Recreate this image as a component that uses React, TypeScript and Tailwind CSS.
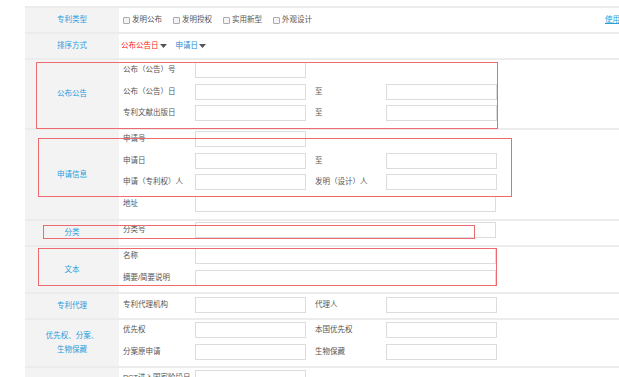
import React from 'react';

const fontStack = '"Liberation Sans", "Noto Sans CJK SC", sans-serif';

const Field: React.FC<{ wide?: boolean }> = ({ wide }) => (
  <div className={`${wide ? 'w-[301px]' : 'w-[111px]'} h-[16px] shrink-0 border border-[#dcdcdc] bg-white`} />
);

interface SubRowProps {
  label: string;
  second?: string;
  wide?: boolean;
}

const SubRow: React.FC<SubRowProps> = ({ label, second, wide }) => (
  <div className="flex h-[16px] items-center">
    <span className="w-[72px] shrink-0 whitespace-nowrap text-[7.5px] text-[#555]">{label}</span>
    <Field wide={wide} />
    {second && (
      <>
        <span className="ml-[9px] w-[71px] shrink-0 whitespace-nowrap text-[7.5px] text-[#555]">{second}</span>
        <Field />
      </>
    )}
  </div>
);

interface RowProps {
  label: React.ReactNode;
  height: string;
  contentClass?: string;
  children: React.ReactNode;
}

const Row: React.FC<RowProps> = ({ label, height, contentClass = '', children }) => (
  <div className={`flex ${height} border-b-2 border-[#ececec]`}>
    <div className="flex w-[94px] shrink-0 items-center justify-center bg-[#f3f3f3] text-center text-[7.5px] leading-[14px] text-[#1f9fdc]">
      {label}
    </div>
    <div className={`flex-1 pl-[4px] ${contentClass}`}>{children}</div>
  </div>
);

const Checkbox: React.FC<{ label: string }> = ({ label }) => (
  <div className="flex w-[50px] shrink-0 items-center">
    <span className="h-[7px] w-[7px] rounded-[1px] border border-[#aaa] bg-[#f4f4f4]" />
    <span className="ml-[2px] whitespace-nowrap text-[7.5px] text-[#555]">{label}</span>
  </div>
);

const Caret: React.FC = () => (
  <svg width="7" height="4" viewBox="0 0 7 4" className="ml-[1px]">
    <path d="M0 0 H7 L3.5 4 Z" fill="#555" />
  </svg>
);

const RedBox: React.FC<{ className: string }> = ({ className }) => (
  <div className={`pointer-events-none absolute border border-[#ee6a6e] ${className}`} />
);

export default function App() {
  return (
    <div className="relative h-[377px] w-[619px] overflow-hidden bg-white" style={{ fontFamily: fontStack }}>
      <div className="ml-[25px] mt-[6px] w-[620px] border-t-2 border-[#ececec]">
        <Row label="专利类型" height="h-[26px]" contentClass="flex items-center">
          <div className="flex w-[482px] shrink-0 items-center">
            <Checkbox label="发明公布" />
            <Checkbox label="发明授权" />
            <Checkbox label="实用新型" />
            <Checkbox label="外观设计" />
          </div>
          <a className="whitespace-nowrap text-[7.5px] text-[#2a9fd6] underline">使用说明</a>
        </Row>

        <Row label="排序方式" height="h-[26px]" contentClass="flex items-center !pl-[2px]">
          <span className="flex items-center text-[7.5px] text-[#ff1a1a]">
            公布公告日
            <Caret />
          </span>
          <span className="ml-[9px] flex items-center text-[7.5px] text-[#1e88d0]">
            申请日
            <Caret />
          </span>
        </Row>

        <Row label="公布公告" height="h-[70px]" contentClass="flex flex-col gap-[5.5px] pt-[2px]">
          <SubRow label="公布（公告）号" />
          <SubRow label="公布（公告）日" second="至" />
          <SubRow label="专利文献出版日" second="至" />
        </Row>

        <Row label="申请信息" height="h-[91px]" contentClass="flex flex-col gap-[5.5px] pt-[1px]">
          <SubRow label="申请号" />
          <SubRow label="申请日" second="至" />
          <SubRow label="申请（专利权）人" second="发明（设计）人" />
          <SubRow label="地址" wide />
        </Row>

        <Row label="分类" height="h-[26px]" contentClass="pt-[1px]">
          <SubRow label="分类号" wide />
        </Row>

        <Row label="文本" height="h-[47px]" contentClass="flex flex-col gap-[5.5px] pt-[1px]">
          <SubRow label="名称" wide />
          <SubRow label="摘要/简要说明" wide />
        </Row>

        <Row label="专利代理" height="h-[26px]" contentClass="pt-[3px]">
          <SubRow label="专利代理机构" second="代理人" />
        </Row>

        <Row
          label={
            <span>
              优先权、分案、
              <br />
              生物保藏
            </span>
          }
          height="h-[48px]"
          contentClass="flex flex-col gap-[5.5px] pt-[2px]"
        >
          <SubRow label="优先权" second="本国优先权" />
          <SubRow label="分案原申请" second="生物保藏" />
        </Row>

        <Row label="" height="h-[40px]" contentClass="pt-[2px]">
          <SubRow label="PCT进入国家阶段日" />
        </Row>
      </div>

      <RedBox className="left-[36px] top-[62px] h-[67px] w-[462px]" />
      <RedBox className="left-[38px] top-[138px] h-[59px] w-[474px]" />
      <RedBox className="left-[43px] top-[225px] h-[14px] w-[432px]" />
      <RedBox className="left-[38px] top-[248px] h-[38px] w-[459px]" />
    </div>
  );
}
